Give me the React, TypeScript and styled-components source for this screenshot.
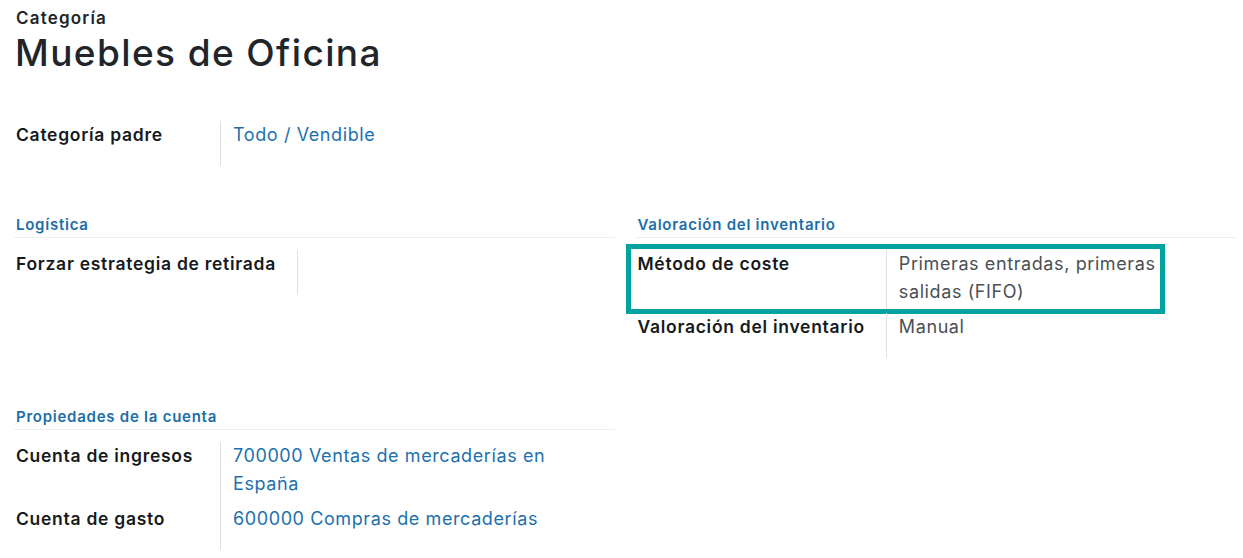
import React from "react";
import styled, { createGlobalStyle } from "styled-components";

const GlobalStyle = createGlobalStyle`
  html, body { margin: 0; padding: 0; background: #ffffff; }
  body {
    font-family: Inter, "Open Sans", "Noto Sans", sans-serif;
    color: #212529;
    -webkit-font-smoothing: antialiased;
  }
  * { box-sizing: border-box; }
`;

const Sheet = styled.div`
  padding: 8px 7px 0 14px;
  width: 1243px;
`;

const Overline = styled.div`
  padding-left: 2px;
  font-size: 17px;
  font-weight: 600;
  line-height: 20px;
  letter-spacing: 1.2px;
  color: #212529;
`;

const Title = styled.h1`
  margin: 3px 0 0;
  padding-left: 1px;
  font-size: 37px;
  font-weight: 500;
  line-height: 44px;
  color: #212529;
  letter-spacing: 1.4px;
`;

const Columns = styled.div`
  margin-top: 46px;
  display: grid;
  grid-template-columns: 1fr 1fr;
  column-gap: 21px;
  row-gap: 49px;
`;

const Group = styled.section`
  min-width: 0;
`;

const SectionTitle = styled.div`
  padding: 0 2px 2px;
  margin-bottom: 12px;
  border-bottom: 1px solid #eceef0;
  font-size: 15px;
  font-weight: 600;
  line-height: 20px;
  letter-spacing: 0.75px;
  color: #1c6ea8;
`;

const FieldGrid = styled.div`
  display: grid;
  grid-template-columns: minmax(207px, max-content) 1fr;
`;

const Row = styled.div<{ $highlight?: boolean }>`
  grid-column: 1 / -1;
  display: grid;
  grid-template-columns: subgrid;
  position: relative;

  ${(p) =>
    p.$highlight &&
    `
    &::after {
      content: "";
      position: absolute;
      top: -6px;
      left: -10px;
      right: 71px;
      bottom: -1px;
      border: 5px solid #02a29e;
      pointer-events: none;
    }
  `}
`;

const Label = styled.div`
  padding: 0 21px 18px 2px;
  border-right: 1px solid #dcdfe3;
  font-size: 17.5px;
  font-weight: 600;
  line-height: 27px;
  letter-spacing: 0.72px;
  color: #161a1d;
  white-space: nowrap;
`;

const Value = styled.div<{ $tone?: "link" | "muted"; $maxWidth?: number }>`
  padding: 0 16px 8px 12px;
  font-size: 18px;
  font-weight: 400;
  line-height: 27.5px;
  letter-spacing: 0.6px;
  color: ${(p) => (p.$tone === "link" ? "#1c71ac" : "#4a4f55")};
  max-width: ${(p) => (p.$maxWidth ? `${p.$maxWidth}px` : "none")};
`;

type Field = {
  label: string;
  value?: string;
  tone?: "link" | "muted";
  highlight?: boolean;
  maxWidth?: number;
};

const FieldList: React.FC<{ fields: Field[] }> = ({ fields }) => (
  <FieldGrid>
    {fields.map((f) => (
      <Row key={f.label} $highlight={f.highlight}>
        <Label>{f.label}</Label>
        <Value $tone={f.tone} $maxWidth={f.maxWidth}>
          {f.value}
        </Value>
      </Row>
    ))}
  </FieldGrid>
);

export default function App() {
  return (
    <>
      <GlobalStyle />
      <Sheet>
        <Overline>Categoría</Overline>
        <Title>Muebles de Oficina</Title>
        <Columns>
          <Group>
            <FieldList
              fields={[{ label: "Categoría padre", value: "Todo / Vendible", tone: "link" }]}
            />
          </Group>
          <div />
          <Group>
            <SectionTitle>Logística</SectionTitle>
            <FieldList fields={[{ label: "Forzar estrategia de retirada" }]} />
          </Group>
          <Group>
            <SectionTitle>Valoración del inventario</SectionTitle>
            <FieldList
              fields={[
                {
                  label: "Método de coste",
                  value: "Primeras entradas, primeras salidas (FIFO)",
                  tone: "muted",
                  highlight: true,
                  maxWidth: 292,
                },
                { label: "Valoración del inventario", value: "Manual", tone: "muted" },
              ]}
            />
          </Group>
          <Group>
            <SectionTitle>Propiedades de la cuenta</SectionTitle>
            <FieldList
              fields={[
                {
                  label: "Cuenta de ingresos",
                  value: "700000 Ventas de mercaderías en España",
                  tone: "link",
                },
                {
                  label: "Cuenta de gasto",
                  value: "600000 Compras de mercaderías",
                  tone: "link",
                },
              ]}
            />
          </Group>
          <div />
        </Columns>
      </Sheet>
    </>
  );
}
